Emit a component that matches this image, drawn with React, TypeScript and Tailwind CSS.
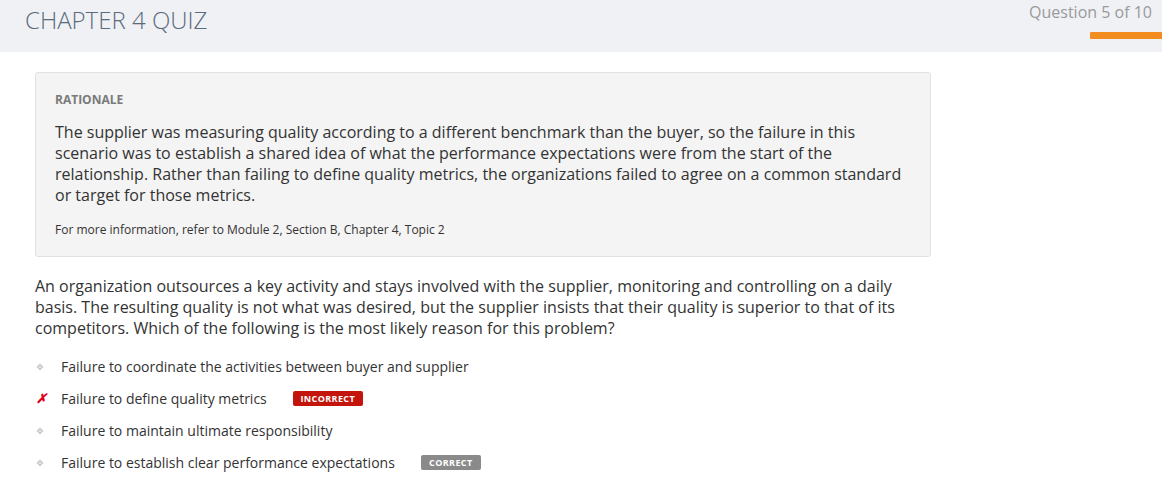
import React from "react";

const options = [
  { text: "Failure to coordinate the activities between buyer and supplier", mark: "dot" },
  { text: "Failure to define quality metrics", mark: "x", badge: "INCORRECT" },
  { text: "Failure to maintain ultimate responsibility", mark: "dot" },
  { text: "Failure to establish clear performance expectations", mark: "dot", badge: "CORRECT" },
];

function Dot() {
  return (
    <svg width="8" height="8" viewBox="0 0 8 8">
      <path d="M4 0.5 L7.5 4 L4 7.5 L0.5 4 Z" fill="#c8c8c8" />
      <path d="M4 2.5 L5.5 4 L4 5.5 L2.5 4 Z" fill="#e8e8e8" />
    </svg>
  );
}

export default function App() {
  return (
    <div className="w-[1162px] h-[477px] bg-white overflow-hidden" style={{ fontFamily: '"Open Sans", sans-serif' }}>
      <div className="h-[52px] bg-[#f0f1f5] flex justify-between">
        <div className="pl-[25px] pt-[2px] text-[24px] font-light text-[#5b6b7c]">CHAPTER 4 QUIZ</div>
        <div className="flex flex-col items-end pt-[1px]">
          <div className="pr-[10px] text-[16px] text-[#9a9a9a] leading-[22px]">Question 5 of 10</div>
          <div className="mt-[9px] w-[72px] h-[7px] bg-[#f38c1f] rounded-l-[1px]" />
        </div>
      </div>
      <div className="pl-[35px] pt-[20px]">
        <div className="w-[896px] bg-[#f4f4f4] border border-[#e2e2e2] rounded-[3px] px-[19px] pt-[19px] pb-[18px]">
          <div className="text-[12px] font-bold text-[#7a7a7a] leading-[16px]">RATIONALE</div>
          <p className="mt-[14px] text-[16px] leading-[21px] text-[#333]">
            The supplier was measuring quality according to a different benchmark than the buyer, so the failure in this scenario was to establish a shared idea of what the performance expectations were from the start of the relationship. Rather than failing to define quality metrics, the organizations failed to agree on a common standard or target for those metrics.
          </p>
          <p className="mt-[16px] text-[12px] leading-[16px] text-[#333]">For more information, refer to Module 2, Section B, Chapter 4, Topic 2</p>
        </div>
        <p className="mt-[19px] w-[870px] text-[16px] leading-[21px] text-[#333]">
          An organization outsources a key activity and stays involved with the supplier, monitoring and controlling on a daily basis. The resulting quality is not what was desired, but the supplier insists that their quality is superior to that of its competitors. Which of the following is the most likely reason for this problem?
        </p>
        <ul className="mt-[18px] flex flex-col gap-[13px]">
          {options.map((o) => (
            <li key={o.text} className="flex items-center h-[19px]">
              <span className="w-[26px] flex items-center pl-[1px]">
                {o.mark === "dot" ? (
                  <Dot />
                ) : (
                  <span className="text-[#e0001a] text-[13px] font-bold italic leading-none">✗</span>
                )}
              </span>
              <span className="text-[14px] text-[#333]">{o.text}</span>
              {o.badge === "INCORRECT" && (
                <span className="ml-[26px] h-[15px] w-[70px] flex items-center justify-center rounded-[2px] bg-[#c4150c] text-white text-[9px] font-bold tracking-[0.4px]">INCORRECT</span>
              )}
              {o.badge === "CORRECT" && (
                <span className="ml-[26px] h-[15px] w-[60px] flex items-center justify-center rounded-[2px] bg-[#8a8a8a] text-white text-[9px] font-bold tracking-[0.4px]">CORRECT</span>
              )}
            </li>
          ))}
        </ul>
      </div>
    </div>
  );
}
